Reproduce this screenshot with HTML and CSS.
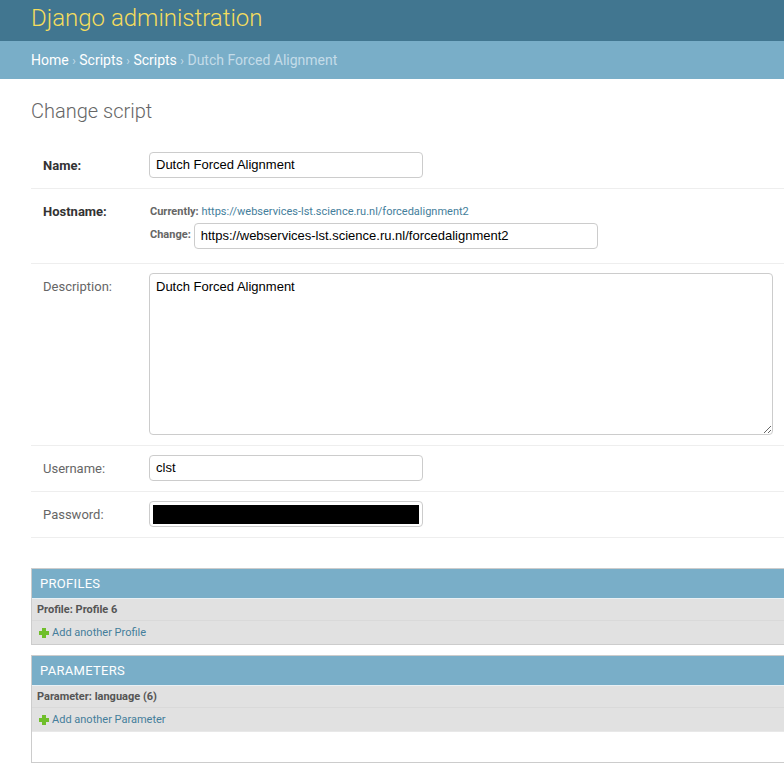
FILE: index.html
```html
<!DOCTYPE html>
<html>
<head>
<meta charset="utf-8">
<title>Change script | Django site admin</title>
<link rel="stylesheet" href="styles.css">
</head>
<body>
<div class="header">
  <div class="branding">Django administration</div>
</div>
<div class="breadcrumbs">
  <a href="#">Home</a><span class="sep">›</span><a href="#">Scripts</a><span class="sep">›</span><a href="#">Scripts</a><span class="sep">›</span><span class="current">Dutch Forced Alignment</span>
</div>
<div class="content">
  <h1 class="title">Change script</h1>
  <div class="fieldset">
    <div class="form-row">
      <label class="label required">Name:</label>
      <div class="field"><div class="input name-input">Dutch Forced Alignment</div></div>
    </div>
    <div class="form-row host-row">
      <label class="label required">Hostname:</label>
      <div class="field file-upload">
        <div class="currently"><span class="small-label">Currently:</span> <a href="#" class="small-link">https://webservices-lst.science.ru.nl/forcedalignment2</a></div>
        <div class="change"><span class="small-label">Change:</span><div class="input url-input">https://webservices-lst.science.ru.nl/forcedalignment2</div></div>
      </div>
    </div>
    <div class="form-row">
      <label class="label">Description:</label>
      <div class="field"><textarea class="textarea">Dutch Forced Alignment</textarea></div>
    </div>
    <div class="form-row">
      <label class="label">Username:</label>
      <div class="field"><div class="input name-input">clst</div></div>
    </div>
    <div class="form-row">
      <label class="label">Password:</label>
      <div class="field"><div class="input name-input pw"><span class="redact"></span></div></div>
    </div>
  </div>

  <div class="inline-group">
    <h2 class="module-title">Profiles</h2>
    <h3 class="inline-item">Profile: Profile 6</h3>
    <div class="add-row"><span class="plus"></span><a href="#">Add another Profile</a></div>
  </div>

  <div class="inline-group">
    <h2 class="module-title">Parameters</h2>
    <h3 class="inline-item">Parameter: language (6)</h3>
    <div class="add-row"><span class="plus"></span><a href="#">Add another Parameter</a></div>
    <div class="empty-area"></div>
  </div>
</div>
</body>
</html>
```
FILE: styles.css
```css
html { overflow: hidden; }
body {
  margin: 0;
  font-family: Roboto, "Liberation Sans", Arial, sans-serif;
  color: #333;
  background: #fff;
}
a { text-decoration: none; }

.header {
  background: #417690;
  height: 41px;
  padding: 0 31px;
  box-sizing: border-box;
}
.branding {
  color: #f5dd5d;
  font-size: 24px;
  font-weight: 300;
  line-height: 36px;
}

.breadcrumbs {
  background: #79aec8;
  height: 38px;
  padding: 0 31px;
  font-size: 14px;
  line-height: 38px;
  color: #c4dce8;
}
.breadcrumbs a { color: #fff; }
.breadcrumbs .sep { font-size: 12px; margin: 0 3.5px; color: #c4dce8; }
.breadcrumbs .current { color: #c4dce8; }

.content {
  padding: 21px 0 0 31px;
}
.title {
  margin: 0 0 20px;
  font-size: 20px;
  font-weight: 300;
  color: #666;
  line-height: 23px;
}

.fieldset { margin-right: -10px; }
.form-row {
  display: flex;
  padding: 9px 10px 10px 12px;
  border-bottom: 1px solid #eee;
  font-size: 13px;
}
.label {
  width: 106px;
  flex: none;
  color: #666;
  padding-top: 6px;
  line-height: 16px;
}
.label.required { color: #333; font-weight: 700; }
.field { flex: 1; min-width: 0; }

.input {
  box-sizing: border-box;
  height: 26px;
  border: 1px solid #ccc;
  border-radius: 4px;
  padding: 0 6px;
  font-family: "Liberation Sans", Arial, sans-serif;
  font-size: 13px;
  line-height: 24px;
  color: #000;
  background: #fff;
}
.name-input { width: 274px; }
.url-input { width: 404px; margin-left: 3px; }

.host-row .label { padding-top: 6px; }
.file-upload { padding-bottom: 4px; }
.currently { padding-top: 3px; height: 22px; line-height: 22px; padding-left: 1px; font-size: 11px; }
.small-label { color: #666; font-weight: 700; font-size: 11px; }
.small-link { color: #447e9b; font-size: 11px; }
.change { display: flex; align-items: center; }
.change .small-label { padding-left: 1px; align-self: flex-start; padding-top: 5px; }

.textarea {
  display: block;
  box-sizing: border-box;
  width: 624px;
  height: 162px;
  border: 1px solid #ccc;
  border-radius: 4px;
  padding: 5px 6px;
  margin: 0;
  font-family: "Liberation Sans", Arial, sans-serif;
  font-size: 13px;
  color: #000;
  resize: both;
}

.pw { padding: 3px 3px 2px; }
.redact { display: block; width: 100%; height: 100%; background: #000; }

.inline-group {
  border: 1px solid #ccc;
  border-right: none;
  margin-right: -10px;
}
.fieldset + .inline-group { margin-top: 30px; }
.inline-group + .inline-group { margin-top: 10px; }

.module-title {
  margin: 0;
  background: #79aec8;
  color: #fff;
  font-size: 13px;
  font-weight: 400;
  letter-spacing: 0.3px;
  text-transform: uppercase;
  height: 29px;
  line-height: 29px;
  padding: 0 8px;
  border-bottom: 1px solid #e8f0f4;
}
.inline-item {
  margin: 0;
  background: #e1e1e1;
  color: #555;
  font-size: 11px;
  font-weight: 700;
  height: 21px;
  line-height: 21px;
  padding: 0 5px;
  border-bottom: 1px solid #d9d9d9;
}
.add-row {
  background: #e1e1e1;
  height: 23px;
  line-height: 23px;
  padding: 0 7px;
  font-size: 11px;
  display: flex;
  align-items: center;
}
.add-row a { color: #447e9b; }
.plus {
  position: relative;
  width: 10px;
  height: 10px;
  margin-right: 3px;
  flex: none;
}
.plus::before, .plus::after {
  content: "";
  position: absolute;
  background: #70bf2b;
}
.plus::before { left: 3px; top: 0; width: 4px; height: 10px; }
.plus::after { left: 0; top: 3px; width: 10px; height: 4px; }
.empty-area { height: 30px; border-top: 1px solid #e8e8e8; }
```
